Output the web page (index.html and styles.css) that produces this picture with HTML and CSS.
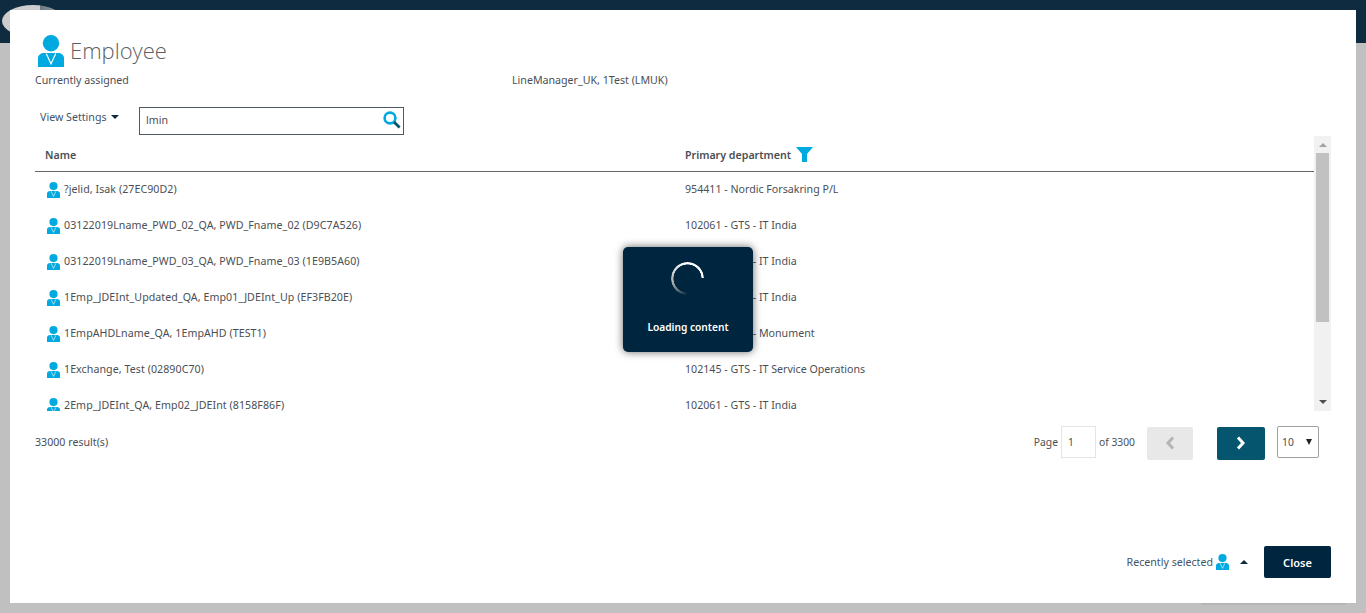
FILE: index.html
```html
<!DOCTYPE html>
<html lang="en">

<head>
    <meta charset="UTF-8">
    <meta name="viewport" content="width=device-width, initial-scale=1.0">
    <title>Employee</title>
    <link rel="stylesheet" href="styles.css">
</head>

<body>
    <svg class="defs" width="0" height="0">
        <symbol id="person" viewBox="0 0 26 32">
            <circle cx="13" cy="8.2" r="8.2" fill="#00a9e0" />
            <path d="M6 18h14c3 0 6 2 6 5v9H0v-9c0-3 3-5 6-5z" fill="#00a9e0" />
            <path d="M8.2 18.5l4.8 10.3 4.8-10.3" fill="none" stroke="#fff" stroke-width="1.2" />
        </symbol>
    </svg>

    <div class="topbar">
        <div class="logo"></div>
    </div>

    <div class="modal">
        <div class="title">
            <svg class="title-icon"><use href="#person" /></svg>
            <h1>Employee</h1>
        </div>

        <div class="assigned">
            <span class="assigned-label">Currently assigned</span>
            <span>LineManager_UK, 1Test (LMUK)</span>
        </div>

        <div class="tools">
            <span class="view-settings">View Settings <i class="caret-down"></i></span>
            <div class="search">
                <span>lmin</span>
                <svg width="18" height="18" viewBox="0 0 18 18">
                    <circle cx="7" cy="7" r="5.4" fill="none" stroke="#00a9e0" stroke-width="2.6" />
                    <path d="M11 11l5.6 5.6" stroke="#005670" stroke-width="2.8" />
                </svg>
            </div>
        </div>

        <div class="list-wrap">
            <div class="list">
                <div class="row head">
                    <div class="col-name">Name</div>
                    <div class="col-dep">Primary department
                        <svg width="17" height="15" viewBox="0 0 17 15">
                            <path d="M0 0h17l-6 7v8H6V7z" fill="#00a9e0" />
                        </svg>
                    </div>
                </div>
                <div class="row">
                    <div class="col-name"><svg class="icon"><use href="#person" /></svg>?jelid, Isak (27EC90D2)</div>
                    <div class="col-dep">954411 - Nordic Forsakring P/L</div>
                </div>
                <div class="row">
                    <div class="col-name"><svg class="icon"><use href="#person" /></svg>03122019Lname_PWD_02_QA, PWD_Fname_02 (D9C7A526)</div>
                    <div class="col-dep">102061 - GTS - IT India</div>
                </div>
                <div class="row">
                    <div class="col-name"><svg class="icon"><use href="#person" /></svg>03122019Lname_PWD_03_QA, PWD_Fname_03 (1E9B5A60)</div>
                    <div class="col-dep">102061 - GTS - IT India</div>
                </div>
                <div class="row">
                    <div class="col-name"><svg class="icon"><use href="#person" /></svg>1Emp_JDEInt_Updated_QA, Emp01_JDEInt_Up (EF3FB20E)</div>
                    <div class="col-dep">102061 - GTS - IT India</div>
                </div>
                <div class="row">
                    <div class="col-name"><svg class="icon"><use href="#person" /></svg>1EmpAHDLname_QA, 1EmpAHD (TEST1)</div>
                    <div class="col-dep">100610 - GTS - Monument</div>
                </div>
                <div class="row">
                    <div class="col-name"><svg class="icon"><use href="#person" /></svg>1Exchange, Test (02890C70)</div>
                    <div class="col-dep">102145 - GTS - IT Service Operations</div>
                </div>
                <div class="row">
                    <div class="col-name"><svg class="icon"><use href="#person" /></svg>2Emp_JDEInt_QA, Emp02_JDEInt (8158F86F)</div>
                    <div class="col-dep">102061 - GTS - IT India</div>
                </div>
            </div>
            <div class="scrollbar">
                <i class="arrow-up"></i>
                <div class="thumb"></div>
                <i class="arrow-down"></i>
            </div>
        </div>

        <div class="pager-row">
            <span>33000 result(s)</span>
            <div class="pager">
                <span>Page</span>
                <span class="page-box">1</span>
                <span>of 3300</span>
                <button class="btn-prev">
                    <svg width="10" height="14" viewBox="0 0 10 14"><path d="M8 1.500L3 7l5 5.500" fill="none" stroke="#b4b4b4" stroke-width="3" /></svg>
                </button>
                <button class="btn-next">
                    <svg width="10" height="14" viewBox="0 0 10 14"><path d="M2 1.500L7 7l-5 5.500" fill="none" stroke="#fff" stroke-width="3" /></svg>
                </button>
                <div class="size-box">10 <i class="size-caret"></i></div>
            </div>
        </div>

        <div class="footer">
            <span class="recent">Recently selected</span>
            <svg class="icon recent-icon"><use href="#person" /></svg>
            <i class="caret-up"></i>
            <button class="btn-close">Close</button>
        </div>
    </div>

    <div class="loading">
        <div class="spinner"></div>
        <div class="loading-text">Loading content</div>
    </div>

    <div class="under-strip"></div>
</body>

</html>
```

FILE: styles.css
```css
* {
    box-sizing: border-box;
    padding: 0;
    margin: 0;
}

html,
body {
    height: 100%;
    overflow: hidden;
}

body {
    background-color: #c0c0c0;
    font-family: "Noto Sans", "Open Sans", sans-serif;
    font-size: 10.65px;
    color: #4a4f55;
}

.defs {
    position: absolute;
}

.topbar {
    height: 43px;
    background-color: #0f2b40;
    overflow: hidden;
}

.logo {
    width: 62px;
    height: 32px;
    margin: 5px 0 0 2px;
    border-radius: 50%;
    background: linear-gradient(to right, #cdcdcd 38px, #6e7a84 38px, #8a949c 53px);
}

.modal {
    position: fixed;
    top: 10px;
    left: 10px;
    width: 1346px;
    height: 593px;
    background-color: white;
    padding: 25px 25px 25px 25px;
    display: flex;
    flex-direction: column;
}

.title {
    display: flex;
    align-items: center;
    height: 32px;
    padding-left: 3px;
}

.title-icon {
    width: 26px;
    height: 32px;
    margin-right: 6px;
}

h1 {
    font-family: "Open Sans", sans-serif;
    font-weight: 300;
    font-size: 22px;
    color: #5c6064;
    padding-bottom: 2px;
}

.assigned {
    display: flex;
    margin-top: 5px;
    height: 16px;
    line-height: 16px;
}

.assigned-label {
    width: 477px;
}

.tools {
    display: flex;
    align-items: flex-start;
    margin-top: 19px;
    padding-left: 5px;
    height: 29px;
}

.view-settings {
    width: 99px;
    line-height: 20px;
    color: #3f5468;
}

.caret-down {
    display: inline-block;
    width: 0;
    height: 0;
    margin-left: 2px;
    vertical-align: 2px;
    border-left: 4px solid transparent;
    border-right: 4px solid transparent;
    border-top: 4px solid #0f2b40;
}

.search {
    width: 265px;
    height: 28px;
    border: 1px solid #4a5a68;
    display: flex;
    align-items: center;
    justify-content: space-between;
    padding: 0 2px 2px 6px;
}

.list-wrap {
    display: flex;
    height: 275px;
    overflow: hidden;
}

.list {
    width: 1279px;
    overflow: hidden;
}

.row {
    display: flex;
    align-items: center;
    height: 36px;
    padding-bottom: 3px;
}

.row.head {
    height: 36px;
    padding: 2px 0 0;
    border-bottom: 1px solid #666;
    font-weight: 600;
}

.col-name {
    width: 650px;
    padding-left: 10px;
    display: flex;
    align-items: center;
    letter-spacing: 0.06px;
}

.col-dep {
    display: flex;
    align-items: center;
    gap: 5px;
}

.icon {
    width: 13px;
    height: 16px;
    margin: 2px 4px 0 2px;
    flex-shrink: 0;
}

.scrollbar {
    width: 17px;
    background-color: #f1f1f1;
    display: flex;
    flex-direction: column;
    align-items: center;
}

.arrow-up,
.arrow-down {
    width: 0;
    height: 0;
    border-left: 4px solid transparent;
    border-right: 4px solid transparent;
}

.arrow-up {
    margin: 7px 0 6px;
    border-bottom: 4px solid #a3a3a3;
}

.thumb {
    width: 13px;
    height: 169px;
    background-color: #c1c1c1;
}

.arrow-down {
    margin-top: auto;
    margin-bottom: 7px;
    border-top: 4px solid #505050;
}

.pager-row {
    display: flex;
    justify-content: space-between;
    align-items: center;
    margin-top: 15px;
    height: 32px;
}

.pager {
    display: flex;
    align-items: center;
    padding-right: 12px;
    font-size: 10.3px;
}

.page-box {
    width: 35px;
    height: 32px;
    line-height: 30px;
    border: 1px solid #e4e4e4;
    padding-left: 6px;
    margin: 0 3px;
}

button {
    border: none;
    border-radius: 2px;
    cursor: pointer;
    display: flex;
    align-items: center;
    justify-content: center;
}

.btn-prev {
    width: 46px;
    height: 33px;
    margin: 2px 0 0 12px;
    background-color: #e8e8e8;
}

.btn-next {
    width: 48px;
    height: 33px;
    margin: 2px 0 0 24px;
    background-color: #05556e;
}

.size-box {
    width: 42px;
    height: 32px;
    line-height: 30px;
    margin-left: 12px;
    padding-left: 4px;
    border: 1px solid #a0a0a0;
    border-radius: 2px;
    position: relative;
}

.size-caret {
    position: absolute;
    top: 12px;
    right: 6px;
    width: 0;
    height: 0;
    border-left: 3px solid transparent;
    border-right: 3px solid transparent;
    border-top: 6px solid #222;
}

.footer {
    display: flex;
    align-items: center;
    justify-content: flex-end;
    margin-top: auto;
    height: 32px;
    color: #3f5468;
}

.recent-icon {
    margin: 0 0 0 3px;
}

.caret-up {
    width: 0;
    height: 0;
    margin: 0 16px 0 11px;
    border-left: 4px solid transparent;
    border-right: 4px solid transparent;
    border-bottom: 4px solid #0f2b40;
}

.btn-close {
    width: 67px;
    height: 32px;
    background-color: #00253e;
    color: white;
    font-family: inherit;
    font-size: 11px;
    font-weight: 600;
}

.loading {
    position: fixed;
    top: 247px;
    left: 623px;
    width: 130px;
    height: 105px;
    background-color: #00253e;
    border-radius: 5px;
    box-shadow: 0 0 9px rgba(0, 0, 0, 0.6);
    display: flex;
    flex-direction: column;
    align-items: center;
    color: white;
}

.spinner {
    width: 33px;
    height: 33px;
    margin-top: 15px;
    margin-right: 1px;
    border-radius: 50%;
    background: conic-gradient(from 180deg, transparent 0deg, #aaa 70deg, #fff 170deg, #fff 270deg, transparent 270deg);
    -webkit-mask: radial-gradient(circle, transparent 13.8px, black 14.3px);
    mask: radial-gradient(circle, transparent 13.8px, black 14.3px);
}

.loading-text {
    margin-top: 25px;
    font-size: 10.2px;
    font-weight: 600;
}

.under-strip {
    position: fixed;
    top: 603px;
    left: 1201px;
    width: 145px;
    height: 2px;
    background-color: #b6b6b6;
}
```
